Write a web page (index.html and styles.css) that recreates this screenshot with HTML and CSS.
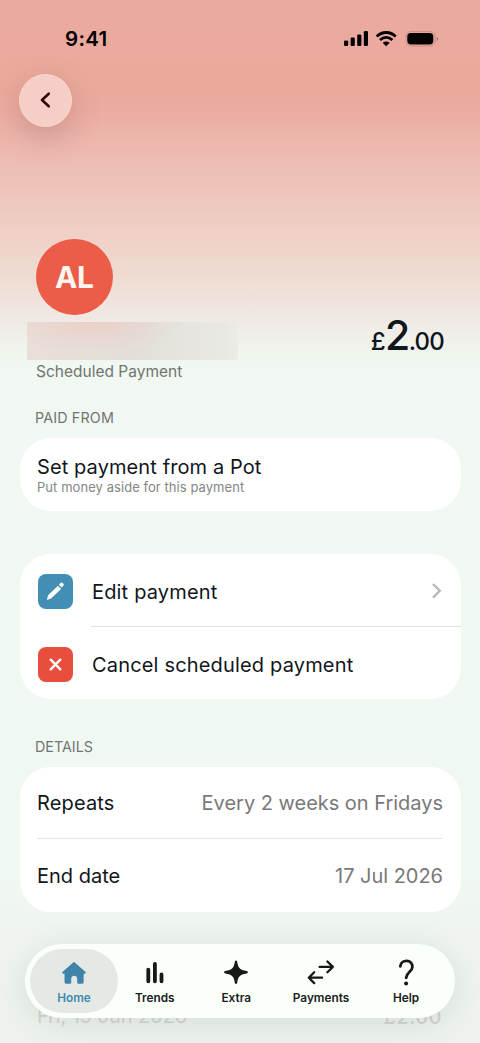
FILE: index.html
```html
<!DOCTYPE html>
<html lang="en">
<head>
<meta charset="utf-8">
<title>Scheduled Payment</title>
<link rel="stylesheet" href="styles.css">
</head>
<body>
<main class="screen">
  <header class="status">
    <span class="time">9:41</span>
    <svg class="status-icons" width="96" height="18" viewBox="0 0 96 18">
      <rect x="0" y="10.5" width="4.2" height="5.5" rx="1.3"/>
      <rect x="6.6" y="7.5" width="4.2" height="8.5" rx="1.3"/>
      <rect x="13.2" y="4.5" width="4.2" height="11.5" rx="1.3"/>
      <rect x="19.8" y="1" width="4.2" height="15" rx="1.3"/>
      <g fill="none" stroke="#000" stroke-width="2.8">
        <path d="M32.7 6.4C38.2 1.2 46.2 1.2 51.7 6.4"/>
        <path d="M36 10C39.8 6.6 44.6 6.6 48.4 10"/>
      </g>
      <path d="M42.2 16.2L38.7 12.7C40.8 11 43.6 11 45.7 12.7Z"/>
      <rect x="62" y="1.6" width="29" height="14.4" rx="4.8" fill="none" stroke="#6d4944" stroke-opacity=".35" stroke-width=".8"/>
      <rect x="63.3" y="3" width="26" height="11.4" rx="3.6"/>
      <path d="M92.8 6.8C94.6 7.6 94.6 10.2 92.8 11Z" fill="#80534d" opacity=".65"/>
    </svg>
  </header>
  <button class="back" aria-label="Back">
    <svg width="12" height="18" viewBox="0 0 12 18"><path d="M8.7 2.7L2 9L8.7 15.3" fill="none" stroke="#300807" stroke-width="2.6" stroke-linecap="round" stroke-linejoin="round"/></svg>
  </button>
  <section class="hero">
    <div class="avatar">AL</div>
    <div class="summary">
      <div class="redacted"></div>
      <div class="amount"><span>£</span><span class="units">2</span><span>.00</span></div>
    </div>
    <p class="kind">Scheduled Payment</p>
  </section>

  <h2 class="label label-paid">PAID FROM</h2>
  <section class="card pot">
    <div class="pot-title">Set payment from a Pot</div>
    <div class="pot-sub">Put money aside for this payment</div>
  </section>

  <section class="card actions">
    <div class="action">
      <span class="tile tile-blue">
        <svg width="35" height="35" viewBox="0 0 35 35" fill="#fff"><path d="M9.4 25.4L10.6 21.1L19.9 12.2L22.6 15L13.3 23.9Z" stroke="#fff" stroke-width=".8" stroke-linejoin="round"/><path d="M20.9 10.7L22.6 9C23.3 8.3 24 8.4 24.6 9L25.3 9.8C25.9 10.5 25.9 11.2 25.3 11.8L23.6 13.5Z"/></svg>
      </span>
      <span class="action-name">Edit payment</span>
      <svg class="chevron" width="14" height="18" viewBox="0 0 14 18"><path d="M2 2L8.8 8.8L2 15.6" fill="none" stroke="#b5b5b5" stroke-width="2.2"/></svg>
    </div>
    <div class="action">
      <span class="tile tile-red">
        <svg width="35" height="35" viewBox="0 0 35 35"><path d="M12.7 12.7L22.3 22.3M22.3 12.7L12.7 22.3" stroke="#fff" stroke-width="2.4" stroke-linecap="round"/></svg>
      </span>
      <span class="action-name">Cancel scheduled payment</span>
    </div>
  </section>

  <h2 class="label label-details">DETAILS</h2>
  <section class="card details">
    <div class="detail"><span class="key">Repeats</span><span class="value">Every 2 weeks on Fridays</span></div>
    <div class="detail"><span>End date</span><span class="value">17 Jul 2026</span></div>
  </section>

  <div class="next"><span class="next-date">Fri, 19 Jun 2026</span><span class="next-sum">£2.00</span></div>

  <nav class="tabs">
    <a class="tab active">
      <svg width="28" height="28" viewBox="-.5 -.5 29 29" fill="#3f83a9"><path d="M12.9 3.3C13.6 2.7 14.4 2.7 15.1 3.3L25.7 12.8C26.6 13.7 26.1 14.8 25 14.8H24V23.3Q24 25.2 22.1 25.2H18.3Q17.3 25.2 17.3 24.2V19.8C17.3 15.8 11.1 15.8 11.1 19.8V24.2Q11.1 25.2 10.1 25.2H6.1Q4.2 25.2 4.2 23.3V14.8H3C1.9 14.8 1.4 13.7 2.3 12.8Z"/></svg>
      <span>Home</span>
    </a>
    <a class="tab">
      <svg width="28" height="28" viewBox="0 0 28 28" stroke="#161a17" stroke-width="3.8" stroke-linecap="round"><path d="M7.3 10.6V22.3M13.9 4.8V22.3M20.5 15.5V22.3"/></svg>
      <span>Trends</span>
    </a>
    <a class="tab">
      <svg width="28" height="28" viewBox="0 0 28 28" fill="#161a17"><path d="M12.8 2.8C13.2 1.2 14.8 1.2 15.2 2.8C16.2 9.3 17.8 10.8 24.6 12.1C26.4 12.6 26.4 14 24.6 14.5C17.8 15.8 16.2 17.3 15.2 23.8C14.8 25.4 13.2 25.4 12.8 23.8C11.8 17.3 10.2 15.8 3.4 14.5C1.6 14 1.6 12.6 3.4 12.1C10.2 10.8 11.8 9.3 12.8 2.8Z"/></svg>
      <span>Extra</span>
    </a>
    <a class="tab tab-payments">
      <svg width="28" height="28" viewBox="0 0 28 28" fill="none" stroke="#161a17" stroke-width="2.3" stroke-linecap="round" stroke-linejoin="round"><path d="M12.6 7.9H25.9M20.4 2.5L25.9 7.9L20.4 13.3M15.1 18.7H1.8M7.2 13.3L1.8 18.7L7.2 24.1"/></svg>
      <span>Payments</span>
    </a>
    <a class="tab tab-help">
      <svg width="28" height="28" viewBox="0 0 28 28"><path d="M8.3 7.4C9 -.1 20.8 .2 20.4 8C20.2 13 14.3 13.2 14.1 18.9" fill="none" stroke="#161a17" stroke-width="2.8" stroke-linecap="round"/><circle cx="14.1" cy="24.6" r="2" fill="#161a17"/></svg>
      <span>Help</span>
    </a>
  </nav>
</main>
</body>
</html>
```
FILE: styles.css
```css
* { box-sizing: border-box; }
body { margin: 0; font-family: Inter, "Liberation Sans", sans-serif; color: #11151c; }
.screen {
  position: relative;
  display: flex;
  flex-direction: column;
  width: 480px;
  height: 1043px;
  overflow: hidden;
  background: linear-gradient(180deg, #ebaa9e 0, #eba99c 95px, #ecaca2 112px, #edb8ae 145px, #edc3b9 185px, #efcdc4 225px, #efdad0 270px, #f0e4de 305px, #f0efe9 335px, #f0f8f1 365px, #f0f8f2 880px, #eff4ef 930px, #edf2ed 1043px);
}
.status { display: flex; align-items: center; height: 74px; padding: 0 41px 0 65px; justify-content: space-between; flex: none; }
.time { font-size: 20.5px; line-height: 24px; font-weight: 600; letter-spacing: .3px; color: #050101; margin-bottom: -4px; }
.status-icons { margin-bottom: -4px; margin-right: -1px; }
.back {
  display: grid; place-items: center; flex: none;
  width: 53px; height: 53px; margin-left: 19px; padding: 0;
  border: 1px solid #f9d9c5; border-radius: 50%;
  background: #f6cec8;
  box-shadow: 0 10px 30px rgba(115, 62, 62, .25);
}
.back svg { margin-top: -1px; }
.hero { display: flex; flex-direction: column; flex: none; padding: 111.5px 36px 0; }
.avatar {
  display: grid; place-items: center; width: 76.5px; height: 76.5px; border-radius: 50%;
  background: #eb5d49; color: #fff6ef; font-size: 30px; line-height: 36px; font-weight: 700; letter-spacing: -.4px;
}
.summary { display: flex; justify-content: space-between; height: 38px; margin: 7px 0 0 -9px; }
.redacted { width: 211px; height: 38px; background: radial-gradient(ellipse 90px 32px at 65px 0, #ebcfc9, rgba(235, 207, 201, 0)), linear-gradient(90deg, #e9dfd7, #e2dfd8 50%, #e8e8e2 92%, #ecece7); }
.amount { display: flex; align-items: baseline; height: 38px; margin-top: -5px; line-height: 36px; font-size: 24px; font-weight: 500; letter-spacing: -.8px; }
.units { font-size: 41px; letter-spacing: -1.4px; }
.kind { margin: 2px 0 0; font-size: 15.5px; line-height: 19px; color: #717573; }
.label { flex: none; margin: 0; padding-left: 35px; font-size: 14.3px; line-height: 18px; font-weight: 400; color: #717573; }
.label-paid { margin-top: 28px; letter-spacing: .15px; }
.card { flex: none; width: 441px; margin-left: 20px; border-radius: 31px; background: #fff; }
.pot { height: 73px; margin-top: 11px; padding: 17px 17px 0; }
.pot-title { font-size: 20px; line-height: 25px; letter-spacing: .1px; }
.pot-sub { margin-top: -1px; font-size: 13px; line-height: 17px; letter-spacing: .06px; color: #858585; }
.actions { height: 145px; margin-top: 43px; }
.action { display: flex; align-items: center; height: 72.5px; padding: 2px 0 0 18px; font-size: 20px; letter-spacing: .17px; position: relative; }
.action-name { padding-top: 2px; }
.action + .action { padding-top: 3px; }
.action + .action .action-name { padding-top: 1px; }
.action + .action::before { content: ""; position: absolute; left: 71px; right: 0; top: -1px; height: 1px; background: #e0e0e0; }
.tile { width: 35px; height: 35px; border-radius: 8px; margin-right: 19px; }
.tile svg { display: block; }
.tile-blue { background: #438eb4; }
.tile-red { background: #e94d3d; }
.chevron { margin: -1px 16px 0 auto; }
.label-details { margin-top: 39px; }
.details { height: 145px; margin-top: 11px; padding: 0 18px 0 17px; }
.detail { display: flex; align-items: center; justify-content: space-between; height: 74px; padding-top: 1px; font-size: 20px; position: relative; }
.detail:first-child { height: 71px; }
.detail + .detail::before { content: ""; position: absolute; left: 0; right: 1px; top: 0; height: 1px; background: #e6e6e6; }
.key { letter-spacing: .15px; }
.value { color: #797979; letter-spacing: -.02px; }
.next { display: flex; justify-content: space-between; flex: none; margin: 92px 38px 0 37px; font-size: 20px; line-height: 25px; color: #d1d5d1; }
.next-date { letter-spacing: -.1px; }
.next-sum { font-weight: 500; margin-top: 1px; letter-spacing: .5px; }
.tabs {
  position: absolute; left: 25px; top: 944px; width: 430px; height: 74px;
  display: flex; align-items: center; padding: 0 6px 0 5px; border-radius: 37px;
  background: #fafffa; box-shadow: 0 5px 30px rgba(60, 75, 65, .13);
}
.tab { display: flex; flex-direction: column; align-items: center; width: 81.5px; height: 64px; padding-top: 10px; font-size: 11.8px; line-height: 16px; font-weight: 600; color: #1b201d; }
.tab svg { margin-bottom: 3px; }
.tab.active { width: 88px; margin-right: -4px; border-radius: 32px; background: #e4e9e6; color: #4289ae; }
.tab-payments { width: 88px; }
.tab-help { width: 82px; }
```
